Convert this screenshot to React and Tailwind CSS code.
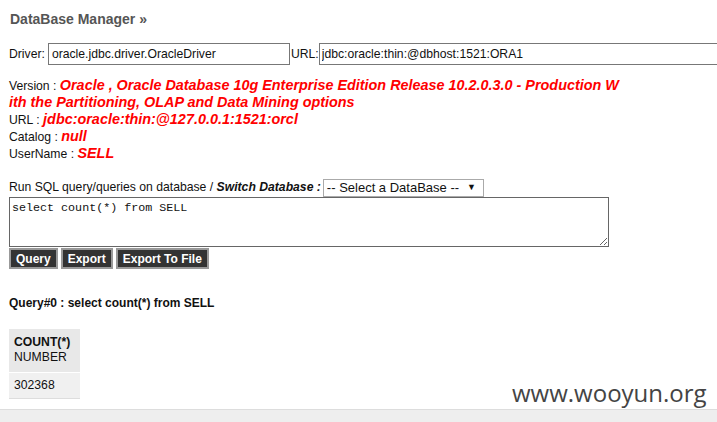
import { useState } from "react";

const Btn = ({ children }) => (
  <button className="h-[21px] border-2 border-[#999] bg-[#333] px-[5px] text-[12px] font-bold leading-none text-white">
    {children}
  </button>
);

const Info = ({ label, children }) => (
  <div className="flex h-[17px] items-baseline whitespace-pre">
    {label && <span>{label} : </span>}
    <b className="text-[14.4px] italic leading-[17px] text-[#f00]">{children}</b>
  </div>
);

export default function App() {
  const [sql, setSql] = useState("select count(*) from SELL");

  return (
    <div className="relative h-[422px] w-[717px] overflow-hidden bg-white font-['Liberation_Sans',Arial,sans-serif] text-[12.2px] text-[#111]">
      <div className="pl-[9px] pt-[10px]">
        {/* HEADER */}
        <h1 className="pl-[1px] text-[14px] font-bold leading-[18px] text-[#555]">DataBase Manager »</h1>

        {/* CONNECTION */}
        <div className="mt-[15px] flex h-[22px] items-center">
          <span className="shrink-0">Driver:</span>
          <input
            defaultValue="oracle.jdbc.driver.OracleDriver"
            className="ml-[3px] h-[22px] w-[242px] shrink-0 border border-[#777] px-[3px] text-[12.2px] outline-none"
          />
          <span className="shrink-0 pl-[1px]">URL:</span>
          <input
            defaultValue="jdbc:oracle:thin:@dbhost:1521:ORA1"
            className="h-[22px] w-[420px] shrink-0 border border-[#777] px-[2px] text-[12.2px] outline-none"
          />
        </div>

        {/* DB INFO */}
        <div className="mt-[12px]">
          <Info label="Version">Oracle , Oracle Database 10g Enterprise Edition Release 10.2.0.3.0 - Production W</Info>
          <Info>ith the Partitioning, OLAP and Data Mining options</Info>
          <Info label="URL">jdbc:oracle:thin:@127.0.0.1:1521:orcl</Info>
          <Info label="Catalog">null</Info>
          <Info label="UserName">SELL</Info>
        </div>

        {/* SQL */}
        <div className="mt-[16px] flex h-[19px] items-center">
          <span>
            Run SQL query/queries on database / <b className="italic">Switch Database :</b>
          </span>
          <div className="ml-[2px] flex h-[18px] w-[161px] items-center justify-between border border-[#aaa] pl-[3px] pr-[7px] text-[13px]">
            <span>-- Select a DataBase --</span>
            <span className="text-[9px]">▼</span>
          </div>
        </div>
        <textarea
          value={sql}
          onChange={(e) => setSql(e.target.value)}
          className="block h-[50px] w-[600px] border border-[#666] px-[2px] py-[3px] font-['Liberation_Mono',monospace] text-[11.7px] leading-[14px] outline-none"
        />
        <div className="mt-[1px] flex gap-[3px]">
          <Btn>Query</Btn>
          <Btn>Export</Btn>
          <Btn>Export To File</Btn>
        </div>

        {/* RESULT */}
        <p className="mt-[27px] text-[12px] font-bold leading-[14px]">Query#0 : select count(*) from SELL</p>
        <table className="mt-[19px] border-collapse">
          <thead>
            <tr className="bg-[#e8e8e8]">
              <th className="h-[43px] pl-[5px] pr-[10px] text-left font-normal leading-[15px]">
                <b>COUNT(*)</b>
                <br />
                NUMBER
              </th>
            </tr>
          </thead>
          <tbody>
            <tr className="border-t border-white bg-[#f0f0f0]">
              <td className="h-[26px] border-b border-[#ddd] pl-[5px]">302368</td>
            </tr>
          </tbody>
        </table>
      </div>

      {/* FOOTER BAR */}
      <div className="absolute bottom-0 left-0 h-[13px] w-full border-t border-[#ddd] bg-[#eee]" />

      {/* WATERMARK */}
      <div className="absolute left-[512px] top-[378px] font-['Open_Sans',sans-serif] text-[24px] leading-[30px] text-[#444]">
        www.wooyun.org
      </div>
    </div>
  );
}
